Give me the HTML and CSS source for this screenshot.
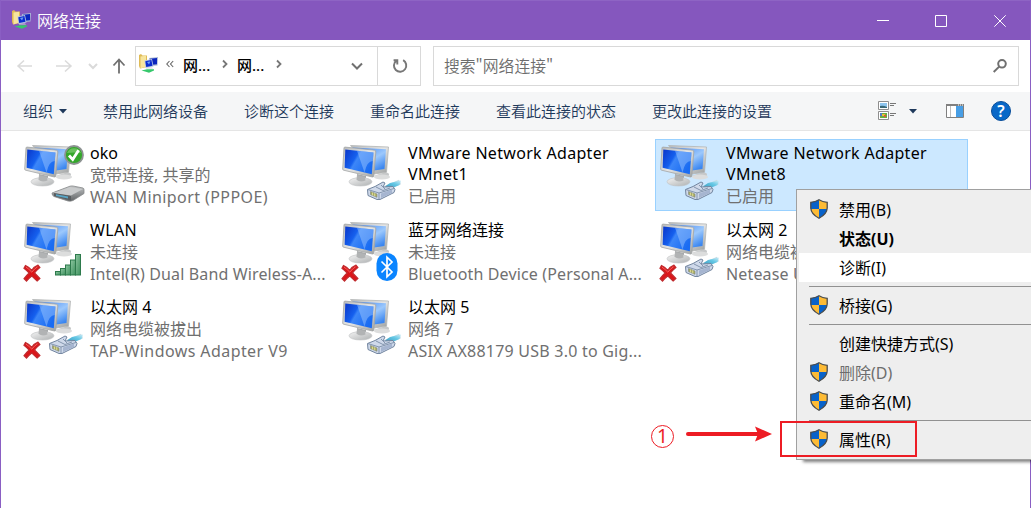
FILE: index.html
```html
<!DOCTYPE html>
<html lang="zh-CN">
<head>
<meta charset="utf-8">
<title>网络连接</title>
<link rel="stylesheet" href="styles.css">
</head>
<body>
<svg class="defs" width="0" height="0">
  <defs>
    <linearGradient id="g-front" x1="0" y1="0" x2="1" y2="0.5"><stop offset="0" stop-color="#0a35c8"/><stop offset=".42" stop-color="#1560ee"/><stop offset=".5" stop-color="#3c86f8"/><stop offset="1" stop-color="#1a6cf2"/></linearGradient>
    <linearGradient id="g-back" x1="0.3" y1="0" x2="1" y2="0.8"><stop offset="0" stop-color="#4d8ff5"/><stop offset=".55" stop-color="#9cc8fc"/><stop offset="1" stop-color="#3a86f0"/></linearGradient>
    <linearGradient id="g-frame" x1="0" y1="0" x2="1" y2="1"><stop offset="0" stop-color="#b9bbbb"/><stop offset=".5" stop-color="#e4e5e5"/><stop offset="1" stop-color="#9c9f9f"/></linearGradient>
    <linearGradient id="g-stand" x1="0" y1="0" x2="1" y2="1"><stop offset="0" stop-color="#f4f4f4"/><stop offset="1" stop-color="#aeb1b2"/></linearGradient>
    <linearGradient id="g-green" x1="0" y1="0" x2="1" y2="1"><stop offset="0" stop-color="#8fc7a2"/><stop offset="1" stop-color="#3b8f5b"/></linearGradient>
    <linearGradient id="g-modem" x1="0" y1="0" x2="0" y2="1"><stop offset="0" stop-color="#c2c4c5"/><stop offset="1" stop-color="#606466"/></linearGradient>
    <linearGradient id="g-cord" x1="0" y1="1" x2="1" y2="0"><stop offset="0" stop-color="#3597bd"/><stop offset=".6" stop-color="#66c8e5"/><stop offset="1" stop-color="#d0edf7"/></linearGradient>
    <symbol id="pcs" viewBox="0 0 64 64">
      <path d="M34 33 Q48 27 49 31 Q50 34 40 36Z" fill="#c6c8c9"/>
      <ellipse cx="42" cy="34" rx="8" ry="2.6" fill="#dcdddd"/>
      <path d="M10.5 2.5 48.5 4 46.5 29.3 34 31Z" fill="url(#g-frame)" stroke="#b2b5b5" stroke-width=".8"/>
      <path d="M12.5 4.5 46 6.2 44.5 26 34 27.5Z" fill="url(#g-back)"/>
      <path d="M17 31 26 33 26 38 17 38Z" fill="#a7aaab"/>
      <ellipse cx="20.5" cy="38.8" rx="11.5" ry="4.2" fill="url(#g-stand)" stroke="#bfc1c2" stroke-width=".6"/>
      <path d="M17 32 25 34 25.5 37.5 Q20 40 16.5 36.8Z" fill="#b1b3b4"/>
      <path d="M4 4.800 Q4.200 4 5.200 4.100L34.500 7.200Q36 7.400 35.800 9L33.800 33Q33.600 34.200 32.400 34L3.600 27.200Q2.600 27 2.700 26Z" fill="url(#g-frame)" stroke="#a2a5a5" stroke-width=".8"/>
      <path d="M5.300 6.500 33.500 9.600 31.800 31.200 4.600 24.800Z" fill="url(#g-front)"/>
      <path d="M17 7.800 33.500 9.600 32.800 18 Q27 18 24.500 29.400Z" fill="#a3ccff" opacity=".45"/>
    </symbol>
    <symbol id="cross" viewBox="0 0 18 18">
      <path d="M2.500 1.500Q6 3 8.800 6.400Q11.500 2.500 15 1.200L16.800 3.400Q13.500 6 11.500 9Q14 11.500 16.800 14.500L14.200 16.900Q11.200 14.400 8.700 11.900Q6 14 3.500 17L1.100 14.600Q3.500 11.500 6.200 9Q3.700 6.400 1 4.300Z" fill="#dc1519" stroke="#c02c2f" stroke-width="1.300"/>
      <path d="M3 3.200Q6 5 8.800 8.200Q11.500 4.600 14.600 2.800" fill="none" stroke="#f5605c" stroke-width="1"/>
    </symbol>
    <symbol id="plug" viewBox="0 0 36 24">
      <path d="M20 9 34 3" stroke="#c6dce5" stroke-width="5"/>
      <path d="M19 7.500 24 4 35 1.500 33.500 6 25 9.500Z" fill="url(#g-cord)"/>
      <path d="M1.500 10.500 9 7.500 17 3 19 4 17 8 27 7.500 29 10.500 28 13.500 14 20.500 11 20.500 2 16.500Z" fill="#cfd9ea" stroke="#72859f" stroke-width="1"/>
      <path d="M1.800 10.500 13 14 28 9.500M13 14V20.500M10 8 17 11.500 24 9M19 10 15 6" fill="none" stroke="#8395ae" stroke-width="1"/>
      <path d="M15 14.500 26 10.500V14L15 19Z" fill="#a6b5d0"/>
      <path d="M4.500 12.500 11 15V18.300L4.500 15.600Z" fill="#a9ad62" stroke="#7d857d" stroke-width=".6"/>
      <path d="M6.500 13.500V16.500M8.700 14.200V17.300" stroke="#e8e3a1" stroke-width=".8"/>
    </symbol>
    <symbol id="signal" viewBox="0 0 28 24">
      <g fill="url(#g-green)" stroke="#2d7a4c" stroke-width="1"><rect x="1.500" y="18.500" width="5" height="3.500"/><rect x="6.500" y="15.500" width="5" height="6.500"/><rect x="11.500" y="12" width="5" height="10"/><rect x="16.500" y="7" width="5" height="15"/><rect x="21.500" y="1.500" width="5" height="20.500"/></g>
    </symbol>
    <symbol id="bluetooth" viewBox="0 0 22 28">
      <rect x=".5" y="0" width="21" height="28" rx="10.500" fill="#0a84ff"/>
      <path d="M5.500 8.500 16 19 11 23.800V4.200L16 9 5.500 19.500" fill="none" stroke="#fff" stroke-width="1.700"/>
    </symbol>
    <symbol id="check" viewBox="0 0 20 20">
      <circle cx="10" cy="10" r="9" fill="#34a72b" stroke="#8d9292" stroke-width="1.800"/>
      <path d="M3 8A7.500 7.500 0 0 1 17 8Q10 7 3 8Z" fill="#80cb73" opacity=".7"/>
      <path d="M5 10.500 8.700 14.500 14.600 5.200" fill="none" stroke="#fff" stroke-width="2.800"/>
    </symbol>
    <symbol id="modem" viewBox="0 0 34 18">
      <path d="M1 8 19 1.200Q21 .7 23 1.200L32 3Q33.200 3.500 33 5V8.500L22 15.500Q20 16.500 17 16L3 11.500Q1 10.700 1 8Z" fill="url(#g-modem)" stroke="#858889" stroke-width=".8"/>
      <path d="M2 8 19 2 32 4 20 10.500Z" fill="#c9cbcc"/>
      <path d="M3 8 20 11V15.500L3 11Z" fill="#585d60"/>
      <path d="M5 9.200 17 11.500V13.500L5 11Z" fill="#58a5c5"/>
    </symbol>
    <symbol id="shield" viewBox="0 0 18 20">
      <path d="M9 .8Q12.500 3 17.200 3.300V9Q17 15 9 19.300Q1 15 .8 9V3.300Q5.500 3 9 .8Z" fill="#fdbb35"/>
      <path d="M9 .8V10H.8V3.300Q5.500 3 9 .8Z" fill="#0862c9"/>
      <path d="M9 10H17.100Q16.500 15.200 9 19.300Z" fill="#fdbb35"/>
      <path d="M9 .8V10H.8V3.300Q5.500 3 9 .8Z" fill="#0862c9"/>
      <path d="M9 10H17.100Q16.500 15.200 9 19.300Z" fill="#0862c9"/>
      <path d="M9 .8Q12.500 3 17.200 3.300V9Q17 15 9 19.300Q1 15 .8 9V3.300Q5.500 3 9 .8Z" fill="none" stroke="#4a4d50" stroke-width="1.300"/>
    </symbol>
    <symbol id="netfolder" viewBox="0 0 20 20">
      <path d="M1 1 3 0 4.500 1.500H9V13L2 14.500 1 12Z" fill="#dfbb55"/>
      <path d="M2.500 2.500 8 1.800V12.500L2.500 14.500Z" fill="#f7e59e"/>
      <path d="M11 4 20 3 19.500 11.500 12 12Z" fill="#a9b7d4"/>
      <path d="M12 4.800 19 4V10.300L12 11Z" fill="#0a25bd"/>
      <path d="M6.500 6.500 14 5 15.500 12.500 7.500 14Z" fill="#b7c5e2"/>
      <path d="M7.300 7.200 13.400 6 14.500 11.800 8.200 13Z" fill="#0a2bd0"/>
      <path d="M9 8 12.500 7.200 11 10.500Z" fill="#6c9df4"/>
      <path d="M8 13.500H14L15 14.500H8Z" fill="#cfd5da"/>
      <path d="M3.500 16.500 9 15.300H16V16.500L11 18.800 7 17.500Z" fill="#36c86c"/>
    </symbol>
  </defs>
</svg>
<div class="window">
  <header class="titlebar">
    <svg class="app-icon"><use href="#netfolder"/></svg>
    <h1 class="title">网络连接</h1>
    <div class="caption">
      <svg viewBox="0 0 12 12"><path d="M0 5.500H12"/></svg>
      <svg viewBox="0 0 12 12"><path d="M.5.5H11.500V11.500H.5Z"/></svg>
      <svg viewBox="0 0 12 12"><path d="M.3.3 11.700 11.700M11.700.3.3 11.700"/></svg>
    </div>
  </header>
  <nav class="navbar">
    <svg class="arrows" viewBox="0 0 134 52">
      <g fill="none" stroke="#dadada" stroke-width="1.500"><path d="M31 26H17M23 20.500 17 26 23 31.500M55 26H69.500M64 20.500 70 26 64 31.500"/><path d="M88 24 92 28 96 24" stroke-width="2"/></g>
      <path d="M118 33.500V20M112.500 25.500 118 19.500 123.500 25.500" fill="none" stroke="#707070" stroke-width="1.800"/>
    </svg>
    <div class="address">
      <svg class="addr-icon"><use href="#netfolder"/></svg>
      <svg class="chev-l" viewBox="0 0 8 8"><path d="M3.500 1 .8 4 3.500 7M7.200 1 4.500 4 7.200 7"/></svg>
      <span class="crumb">网...</span>
      <svg class="chev-r" viewBox="0 0 6 10"><path d="M1 1.500 4.500 5 1 8.500"/></svg>
      <span class="crumb">网...</span>
      <svg class="chev-r" viewBox="0 0 6 10"><path d="M1 1.500 4.500 5 1 8.500"/></svg>
      <svg class="chev-d" viewBox="0 0 12 8"><path d="M1 1.500 6 6.500 11 1.500"/></svg>
      <div class="refresh"><svg viewBox="0 0 16 16"><path d="M10.500 3A5.800 5.800 0 1 1 4 3.500M1.500 3H5V7"/></svg></div>
    </div>
    <div class="search"><span>搜索"网络连接"</span>
      <svg viewBox="0 0 14 14"><circle cx="9" cy="4.800" r="3.800"/><path d="M6.200 7.600 .7 13"/></svg>
    </div>
  </nav>
  <div class="toolbar">
    <span class="organize">组织<svg class="caret" viewBox="0 0 8 5"><path d="M0 0H8L4 4.500Z"/></svg></span>
    <span>禁用此网络设备</span><span>诊断这个连接</span><span>重命名此连接</span><span>查看此连接的状态</span><span>更改此连接的设置</span>
    <svg class="view" viewBox="0 0 18 19">
      <path d="M.5.5H10.500V8.500H.5ZM.5 10.500H10.500V18.500H.5Z" fill="#fff" stroke="#8e8e8e"/>
      <path d="M2 2H9V7H2Z" fill="#8ec5ef"/><path d="M2 5Q5 4 9 6V7H2Z" fill="#396876"/>
      <path d="M2 12H9V17H2Z" fill="#69ad42"/><path d="M2 12H4V15H2Z" fill="#527ac9"/><path d="M4 13H7V15H4Z" fill="#edbc35"/><path d="M6 14H8V16H6Z" fill="#d95a36"/>
      <path d="M12 2.500H18M12 4.500H16M12 12.500H18M12 14.500H16" stroke="#777"/>
    </svg>
    <svg class="caret view-caret" viewBox="0 0 8 5"><path d="M0 0H8L4 4.500Z"/></svg>
    <svg class="pane" viewBox="0 0 18 14"><path d="M.5.5H17.500V13.500H.5Z" fill="#fff" stroke="#808080"/><path d="M0 0H18V2H0Z" fill="#808080"/><path d="M12 .5H13V1.500H12ZM14 .5H15V1.500H14ZM16 .5H17V1.500H16Z" fill="#fff"/><path d="M4.500 2V13" stroke="#bdbdbd"/><path d="M10 2H17V13H10Z" fill="#489ee5"/></svg>
    <span class="help">?</span>
  </div>
  <main class="connections">
    <section class="tile"><svg class="tile-icon"><use href="#pcs"/><use href="#check" x="42" y="2" width="20" height="20"/><use href="#modem" x="29" y="42" width="34" height="18"/></svg><div class="info"><h2>oko</h2><p>宽带连接, 共享的</p><p class="device wide">WAN Miniport (PPPOE)</p></div></section>
    <section class="tile"><svg class="tile-icon"><use href="#pcs"/><use href="#plug" x="26" y="36" width="36" height="24"/></svg><div class="info"><h2 class="adapter">VMware Network Adapter<br>VMnet1</h2><p>已启用</p></div></section>
    <section class="tile selected"><svg class="tile-icon"><use href="#pcs"/><use href="#plug" x="26" y="36" width="36" height="24"/></svg><div class="info"><h2 class="adapter">VMware Network Adapter<br>VMnet8</h2><p>已启用</p></div></section>
    <section class="tile"><svg class="tile-icon"><use href="#pcs"/><use href="#cross" x="1" y="44" width="18" height="18"/><use href="#signal" x="32" y="33" width="28" height="24"/></svg><div class="info"><h2 class="adapter">WLAN</h2><p>未连接</p><p class="device">Intel(R) Dual Band Wireless-A...</p></div></section>
    <section class="tile"><svg class="tile-icon"><use href="#pcs"/><use href="#cross" x="1" y="44" width="18" height="18"/><use href="#bluetooth" x="36" y="33" width="22" height="28"/></svg><div class="info"><h2>蓝牙网络连接</h2><p>未连接</p><p class="device">Bluetooth Device (Personal A...</p></div></section>
    <section class="tile"><svg class="tile-icon"><use href="#pcs"/><use href="#cross" x="1" y="44" width="18" height="18"/><use href="#plug" x="26" y="36" width="36" height="24"/></svg><div class="info"><h2>以太网 2</h2><p>网络电缆被拔出</p><p class="device">Netease U</p></div></section>
    <section class="tile"><svg class="tile-icon"><use href="#pcs"/><use href="#cross" x="1" y="44" width="18" height="18"/><use href="#plug" x="26" y="36" width="36" height="24"/></svg><div class="info"><h2>以太网 4</h2><p>网络电缆被拔出</p><p class="device wide">TAP-Windows Adapter V9</p></div></section>
    <section class="tile"><svg class="tile-icon"><use href="#pcs"/><use href="#plug" x="26" y="36" width="36" height="24"/></svg><div class="info"><h2>以太网 5</h2><p>网络 7</p><p class="device medium">ASIX AX88179 USB 3.0 to Gig...</p></div></section>
  </main>
</div>
<ul class="menu">
  <li><svg><use href="#shield"/></svg>禁用(B)</li>
  <li class="default">状态(U)</li>
  <li class="hover">诊断(I)</li>
  <li class="separator"></li>
  <li><svg><use href="#shield"/></svg>桥接(G)</li>
  <li class="separator"></li>
  <li>创建快捷方式(S)</li>
  <li class="disabled"><svg><use href="#shield"/></svg>删除(D)</li>
  <li><svg><use href="#shield"/></svg>重命名(M)</li>
  <li class="separator"></li>
  <li><svg><use href="#shield"/></svg>属性(R)</li>
</ul>
<div class="callout-box"></div>
<div class="callout"><span class="step">1</span>
  <svg viewBox="0 0 88 18"><path d="M3 9H68" stroke="#ed1c24" stroke-width="4" stroke-linecap="round"/><path d="M70 1.500 87 9 70 16.500 73 9Z" fill="#ed1c24"/><path d="M66 9H75" stroke="#ed1c24" stroke-width="4"/></svg>
</div>
</body>
</html>
```
FILE: styles.css
```css
* { box-sizing: border-box; margin: 0; padding: 0; }
body { width: 1031px; height: 508px; overflow: hidden; position: relative; background: #fff; font: 16px/22px "Noto Sans", "Noto Sans CJK SC", sans-serif; color: #000; white-space: nowrap; }
svg { display: block; flex: none; }
.defs { position: absolute; }
.window { width: 1031px; height: 508px; border: solid #8a5ec3; border-width: 0 1px; display: flex; flex-direction: column; }
.titlebar { height: 40px; background: #8557be; border-top: 1px solid #8e64c4; display: flex; align-items: center; padding: 0 24px 0 10px; }
.app-icon { width: 20px; height: 20px; margin: -2px 6px 0 0; }
.title { margin-top: -2px; font: 16px/22px "Noto Sans CJK SC", sans-serif; font-weight: 350; color: #fff; }
.caption { margin-left: auto; display: flex; gap: 46px; }
.caption svg { width: 12px; height: 12px; fill: none; stroke: #fff; stroke-width: 1; }
.caption svg:last-child { margin-left: 1px; }
.navbar { height: 52px; display: flex; align-items: center; padding-right: 11px; }
.arrows { width: 134px; height: 52px; }
.address { width: 286px; height: 40px; margin-top: -1px; border: 1px solid #d9d9d9; display: flex; align-items: center; padding-left: 2px; }
.addr-icon { width: 20px; height: 20px; margin-top: -3px; }
.chev-l { width: 8px; height: 8px; margin: -3px 9px 0 8px; fill: none; stroke: #666; stroke-width: 1.1; }
.crumb { width: 28px; font-weight: 500; font-size: 15px; margin-top: -2px; }
.chev-r { width: 6px; height: 10px; margin: -3px 9px 0 11px; fill: none; stroke: #777; stroke-width: 1.8; }
.chev-d { width: 12px; height: 8px; margin: 0 14px 0 auto; fill: none; stroke: #707070; stroke-width: 2; }
.refresh { width: 43px; height: 38px; border-left: 1px solid #d9d9d9; display: grid; place-items: center; }
.refresh svg { width: 17px; height: 17px; margin-left: 2px; fill: none; stroke: #777; stroke-width: 1.8; }
.search { width: 586px; height: 40px; margin: -1px 0 0 auto; border: 1px solid #d9d9d9; display: flex; align-items: center; justify-content: space-between; padding: 0 11px 0 10px; color: #6d6d6d; font: 15.8px/22px "Noto Sans CJK SC", sans-serif; font-weight: 350; }
.search svg { width: 14px; height: 14px; fill: none; stroke: #707070; stroke-width: 2; }
.toolbar { height: 39px; background: #f5f6f7; border-bottom: 1px solid #e5e5e5; display: flex; align-items: center; gap: 36px; padding: 0 19px 0 22px; color: #1e395b; font: 15px/22px "Noto Sans CJK SC", sans-serif; font-weight: 350; }
.organize { display: flex; align-items: center; gap: 6px; }
.caret { width: 8px; height: 5px; fill: #1e395b; }
.view { width: 18px; height: 19px; margin: -1px 0 0 auto; }
.view-caret { margin-left: -23px; }
.pane { width: 18px; height: 14px; margin-left: -7px; }
.help { width: 20px; height: 20px; border-radius: 50%; background: #0868c8; border: 1px solid #084d99; margin-left: -9px; color: #fff; text-align: center; font: 600 16px/18px "Noto Sans", sans-serif; }
.connections { display: grid; grid-template-columns: repeat(3, 313px); grid-auto-rows: 72px; gap: 5px; padding: 8px 0 0 18px; }
.tile { border: 1px solid transparent; display: flex; }
.selected { background: #cce8ff; border-color: #99d1ff; }
.tile-icon { width: 64px; height: 64px; margin: 3px 4px 0 2px; }
.info { padding-top: 3px; color: #707070; }
.info h2 { font-size: 16px; font-weight: 400; line-height: 21px; color: #000; }
.info p { line-height: 22px; }
.info .adapter { letter-spacing: .32px; }
.info .device { letter-spacing: .14px; }
.info .medium { letter-spacing: .22px; }
.info .wide { letter-spacing: .42px; }
.menu { position: absolute; left: 796px; top: 189px; width: 245px; height: 271px; background: #eee; border: 1px solid #a0a0a0; padding: 5px 2px; box-shadow: 5px 4px 3px -2px rgba(0,0,0,.5); list-style: none; }
.menu li { height: 29px; line-height: 31px; padding-left: 40px; display: flex; }
.menu svg { width: 18px; height: 20px; margin: 4px 11px 0 -29px; }
.menu .hover { background: #fff; }
.menu .default { font-weight: 700; }
.menu .disabled { color: #6d6d6d; }
.menu .separator { height: 1px; padding: 0; margin: 4px 0 4px 10px; background: #919191; }
.callout-box { position: absolute; left: 780px; top: 421px; width: 137px; height: 36px; border: 2px solid #ed1c24; }
.callout { position: absolute; left: 651px; top: 425px; display: flex; gap: 11px; color: #ed1c24; }
.step { width: 23px; height: 23px; border: 1.5px solid #ed1c24; border-radius: 50%; text-align: center; font: 19px/20px "Noto Sans", sans-serif; }
.callout svg { width: 88px; height: 18px; }
```
